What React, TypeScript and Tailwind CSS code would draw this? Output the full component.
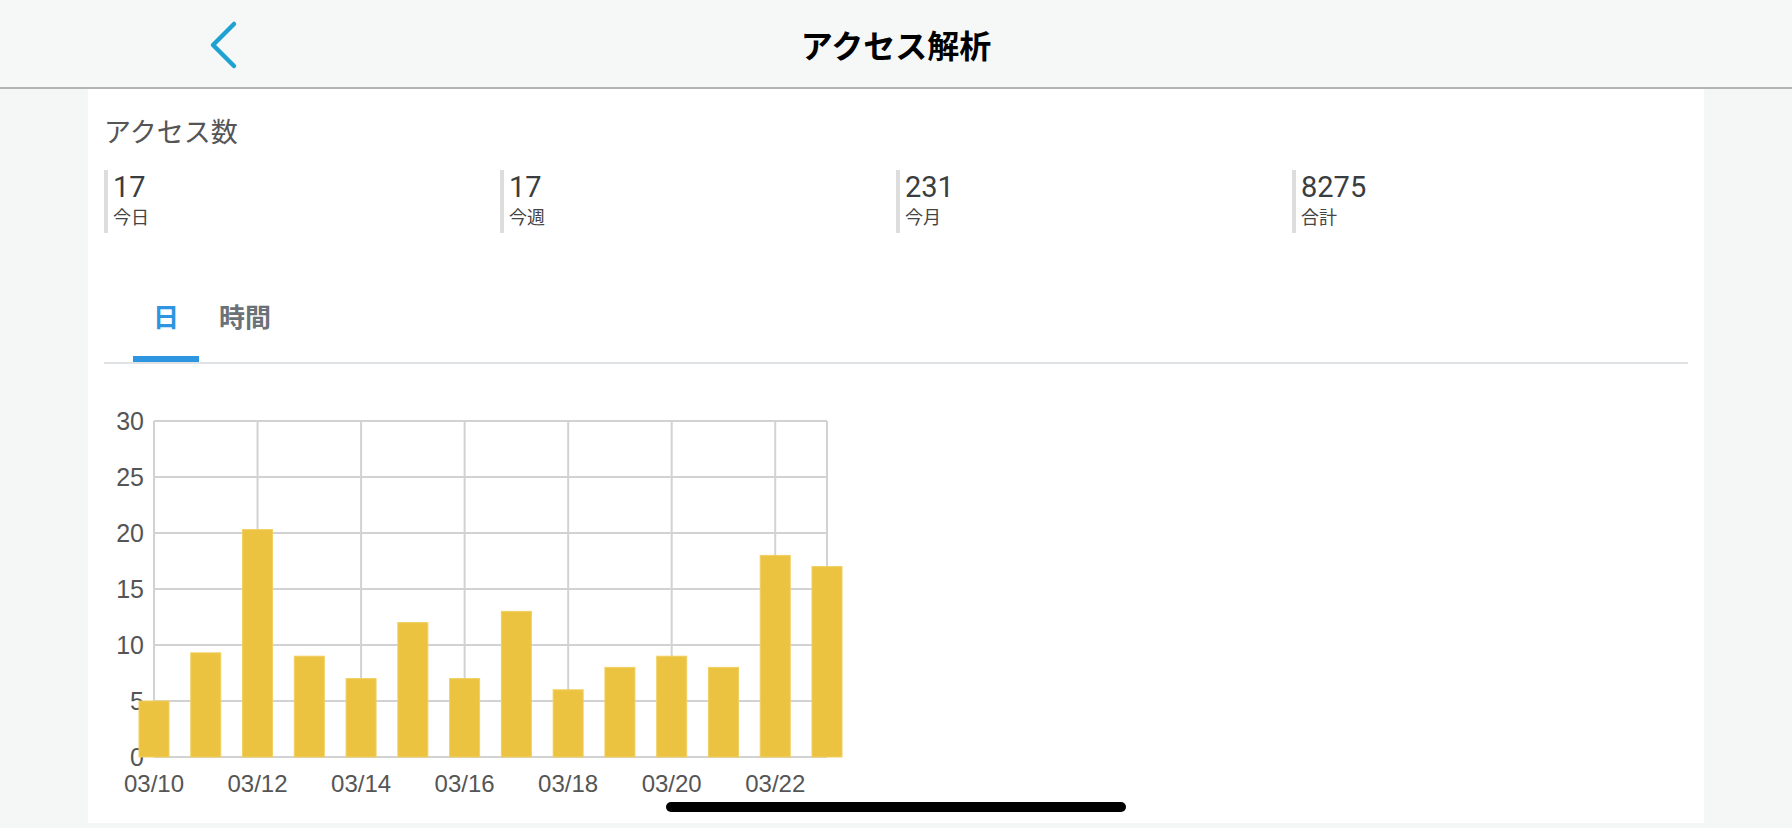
import React from 'react';

const stats = [
  { value: '17', label: '今日' },
  { value: '17', label: '今週' },
  { value: '231', label: '今月' },
  { value: '8275', label: '合計' },
];

const days = ['03/10', '03/11', '03/12', '03/13', '03/14', '03/15', '03/16', '03/17', '03/18', '03/19', '03/20', '03/21', '03/22', '03/23'];
const values = [5, 9.3, 20.3, 9, 7, 12, 7, 13, 6, 8, 9, 8, 18, 17];

// chart geometry (svg coords)
const left = 50;
const right = 723;
const top = 31;
const bottom = 367;
const step = (right - left) / (days.length - 1);
const unit = (bottom - top) / 30;

function BarChart() {
  return (
    <svg width="760" height="432" className="block">
      {[0, 5, 10, 15, 20, 25, 30].map((t) => {
        const y = bottom - t * unit;
        return (
          <g key={t}>
            <line x1={left} x2={right} y1={y} y2={y} stroke="#d2d2d2" strokeWidth="2" />
            <text x="40" y={y + 8.8} textAnchor="end" fontSize="25" fill="#555" fontFamily="'Liberation Sans', Arial, sans-serif">
              {t}
            </text>
          </g>
        );
      })}
      {days.map((d, i) => {
        const x = left + step * i;
        const showGrid = i % 2 === 0 || i === days.length - 1;
        return showGrid ? <line key={d} x1={x} x2={x} y1={top} y2={bottom} stroke="#d2d2d2" strokeWidth="2" /> : null;
      })}
      {values.map((v, i) => {
        const x = left + step * i;
        const h = v * unit;
        return <rect key={i} x={x - 15} y={bottom - h} width="30" height={h} fill="#ecc241" stroke="#f0d061" strokeWidth="1" />;
      })}
      {days.map((d, i) =>
        i % 2 === 0 ? (
          <text key={d} x={left + step * i} y="402" textAnchor="middle" fontSize="24" fill="#555" fontFamily="'Liberation Sans', Arial, sans-serif">
            {d}
          </text>
        ) : null
      )}
    </svg>
  );
}

export default function App() {
  return (
    <div
      className="relative w-[1792px] h-[828px] overflow-hidden bg-[#f5f6f6] flex flex-col"
      style={{ fontFamily: "Roboto, 'Noto Sans CJK JP', sans-serif" }}
    >
      <header className="relative h-[89px] shrink-0 bg-[#f6f7f7] border-b-2 border-[#b4b4b4] flex items-center justify-center">
        <button className="absolute left-[204px] top-[20px] w-[36px] h-[50px] flex items-center justify-center">
          <svg width="36" height="50" viewBox="0 0 36 50">
            <path d="M30 4 L9 25 L30 46" fill="none" stroke="#1ea2d2" strokeWidth="4.5" strokeLinecap="round" strokeLinejoin="round" />
          </svg>
        </button>
        <h1 className="text-[32px] leading-[40px] font-bold text-black" style={{ fontFamily: "'Noto Sans CJK JP', sans-serif" }}>
          アクセス解析
        </h1>
      </header>

      <main className="flex-1 mx-[88px] mb-[5px] bg-white px-4 pt-[29px]">
        <h2 className="text-[27px] leading-[30px] text-[#555]">アクセス数</h2>

        <div className="mt-[22px] grid grid-cols-4">
          {stats.map((s) => (
            <div key={s.label} className="h-[63px] border-l-4 border-[#dddddd] pl-[5px]">
              <div className="text-[29px] leading-[34px] text-[#3a3d40]">{s.value}</div>
              <div className="mt-[2px] text-[18px] leading-[24px] text-[#444]">{s.label}</div>
            </div>
          ))}
        </div>

        <div className="mt-[69px] flex pl-[29px] border-b-2 border-[#dfe3e6]">
          <button className="flex flex-col items-center">
            <span className="px-[20px] text-[26px] leading-[32px] font-bold text-[#2e96e0]">日</span>
            <span className="mt-[22px] h-[6px] w-full bg-[#2e96e0]" />
          </button>
          <button className="flex flex-col items-center">
            <span className="px-[20px] text-[26px] leading-[32px] font-bold text-[#6b7277]">時間</span>
            <span className="mt-[22px] h-[6px] w-full bg-transparent" />
          </button>
        </div>

        <div className="mt-[26px]">
          <BarChart />
        </div>
      </main>

      <div className="absolute left-[666px] top-[802px] h-[10px] w-[460px] rounded-full bg-black" />
    </div>
  );
}
